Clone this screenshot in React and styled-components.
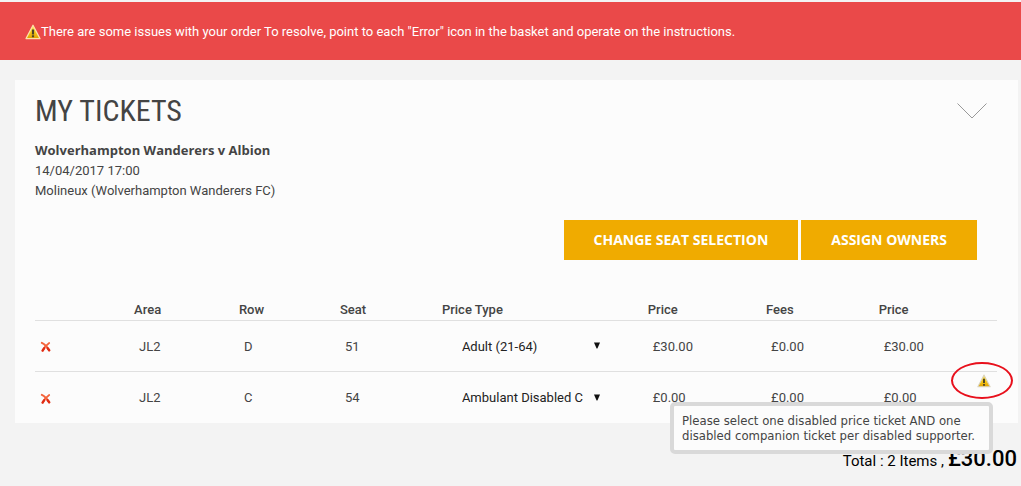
import React, { useState } from 'react'
import styled, { createGlobalStyle } from 'styled-components'

const GlobalStyle = createGlobalStyle`
  *{
    box-sizing: border-box;
  }
  body{
    margin: 0;
    background-color: #f3f3f3;
    color: #444;
    font-family: Roboto, "Liberation Sans", sans-serif;
    font-size: 13px;
    line-height: 20px;
  }
`
const Page = styled.div`
  padding-top: 2px;
`
const Banner = styled.div`
  display: flex;
  align-items: center;
  height: 58px;
  padding: 2px 25px 0;
  background-color: #ea4949;
  color: #fff;
`
const Content = styled.main`
  padding: 20px 3px 0 15px;
`
const Card = styled.section`
  padding: 13px 21px 0 20px;
  background-color: #fcfcfc;
`
const CardHeader = styled.header`
  display: flex;
  justify-content: space-between;
  align-items: center;
  height: 36px;
  padding-right: 9px;
`
const Title = styled.h1`
  margin: 0;
  font-family: "Roboto Condensed", Roboto, sans-serif;
  font-size: 30px;
  line-height: 36px;
  font-weight: 400;
`
const IconButton = styled.button`
  display: inline-flex;
  padding: 0;
  border: none;
  background: none;
  vertical-align: middle;
  cursor: pointer;
`
const Details = styled.div`
  padding-top: 12px;
`
const Line = styled.p`
  margin: 0;
`
const EventName = styled.h2`
  margin: 0 0 2px;
  font-family: "Open Sans", sans-serif;
  font-size: 13px;
  line-height: 18px;
  font-weight: 700;
`
const Actions = styled.div`
  display: flex;
  justify-content: flex-end;
  gap: 3px;
  padding: 19px 20px 40px 0;
`
const ActionButton = styled.button`
  height: 40px;
  padding: 0 30px 2px;
  border: none;
  background-color: #f0ab00;
  color: #fff;
  font-family: "Open Sans", sans-serif;
  font-size: 14px;
  font-weight: 700;
  text-transform: uppercase;
  cursor: pointer;
`
const Table = styled.table`
  width: 100%;
  table-layout: fixed;
  border-collapse: separate;
  border-spacing: 0;
`
const Col = styled.col`
  width: ${props => props.$width};
`
const Th = styled.th`
  height: 21px;
  padding: 0;
  border-bottom: 1px solid #e0e0e0;
  font-weight: 500;
  text-align: left;
`
const Td = styled.td`
  height: 51px;
  padding: 1px 0 0 5px;
  border-bottom: ${props => props.$last ? 'none' : '1px solid #e0e0e0'};
`
const FlagCell = styled(Td)`
  padding: 2px 6px 0 0;
  text-align: right;
  vertical-align: top;
`
const SelectBox = styled.div`
  display: flex;
  align-items: center;
  width: 160px;
  margin-left: 15px;
`
const Select = styled.select`
  flex: 1;
  min-width: 0;
  padding: 0;
  border: none;
  background: none;
  appearance: none;
  color: #222;
  font: inherit;
`
const Arrow = styled.svg`
  flex: none;
  margin-right: 21px;
  pointer-events: none;
`
const Flag = styled.span`
  position: relative;
  display: inline-flex;
`
const Ring = styled.span`
  position: absolute;
  left: -26px;
  top: -12px;
  width: 62px;
  height: 37px;
  border: 2px solid #e8101c;
  border-radius: 50%;
  pointer-events: none;
`
const Tooltip = styled.span`
  position: absolute;
  top: 28px;
  right: -2px;
  z-index: 5;
  width: 323px;
  padding: 7px 8px;
  border: 4px solid #d9d9d9;
  border-radius: 5px;
  background-color: #fcfcfc;
  font-family: "DejaVu Sans Condensed", "DejaVu Sans", sans-serif;
  font-size: 13px;
  line-height: 15px;
  text-align: left;
`
const Total = styled.div`
  display: flex;
  justify-content: flex-end;
  align-items: baseline;
  gap: 4px;
  padding: 20px 1px 0 0;
  color: #000;
  font-size: 15px;
  line-height: 32px;
`
const Amount = styled.strong`
  font-size: 22px;
  font-weight: 500;
`

const columns = [
  { label: '', width: '10.3%' },
  { label: 'Area', width: '10.9%' },
  { label: 'Row', width: '10.5%' },
  { label: 'Seat', width: '10.6%' },
  { label: 'Price Type', width: '21.4%' },
  { label: 'Price', width: '12.3%' },
  { label: 'Fees', width: '11.7%' },
  { label: 'Price', width: '8.2%' },
  { label: '', width: '4.1%' },
]

const tickets = [
  { area: 'JL2', row: 'D', seat: '51', type: 'Adult (21-64)', price: '£30.00', fees: '£0.00', total: '£30.00' },
  {
    area: 'JL2', row: 'C', seat: '54', type: 'Ambulant Disabled C', price: '£0.00', fees: '£0.00', total: '£0.00',
    error: 'Please select one disabled price ticket AND one disabled companion ticket per disabled supporter.',
  },
]

const WarningIcon = ({ size, outline }) => (
  <svg width={size} height={size} viewBox="0 0 16 16" aria-hidden="true">
    <defs>
      <linearGradient id="warn" x1="0" y1="0" x2="0" y2="1">
        <stop offset="0" stopColor="#fbe36a" />
        <stop offset="0.5" stopColor="#f8cc1c" />
        <stop offset="1" stopColor="#e0a000" />
      </linearGradient>
    </defs>
    <path d="M8 1.2 15 14.6H1Z" fill="url(#warn)" stroke={outline} strokeWidth="1.2" strokeLinejoin="round" />
    <path d="M6.9 5.5h2.2v4.9H6.9zM6.9 11.3h2.2v2H6.9z" fill="#4d4526" />
  </svg>
)

const RemoveIcon = () => (
  <svg width="12" height="12" viewBox="0 0 12 12" aria-hidden="true">
    <path d="M1.8 1.8C4 2.8 7.2 5.8 9.2 9.2" fill="none" stroke="#f4643c" strokeWidth="2" strokeLinecap="round" />
    <path d="M9.2 2C6.6 3.8 4.2 6.4 2.6 9.6" fill="none" stroke="#f4643c" strokeWidth="1.8" strokeLinecap="round" />
    <path d="M4.2 7.2 2.6 9.6M7.6 7.2 9.2 9.2" fill="none" stroke="#e02c14" strokeWidth="2.4" strokeLinecap="round" />
  </svg>
)

const PriceType = ({ value }) => (
  <SelectBox>
    <Select aria-label="Price type" defaultValue={value}>
      <option>{value}</option>
    </Select>
    <Arrow width="8" height="9" viewBox="0 0 8 9" aria-hidden="true">
      <path d="M1 0.5h6L4.4 6.5h-.8Z" fill="#111" />
    </Arrow>
  </SelectBox>
)

const App = () => {

  const [open, setOpen] = useState(true)

  return (
    <Page>
      <GlobalStyle />
      <Banner role="alert">
        <WarningIcon size={16} outline="#fbe3a8" />
        There are some issues with your order To resolve, point to each "Error" icon in the basket and operate on the instructions.
      </Banner>
      <Content>
        <Card>
          <CardHeader>
            <Title>MY TICKETS</Title>
            <IconButton aria-label="Toggle tickets" onClick={() => setOpen(!open)}>
              <svg width="32" height="18" viewBox="0 0 32 18" aria-hidden="true">
                <path d="M1.5 1.5 16 16 30.5 1.5" fill="none" stroke="#999" />
              </svg>
            </IconButton>
          </CardHeader>
          {open && (
            <>
              <Details>
                <EventName>Wolverhampton Wanderers v Albion</EventName>
                <Line>14/04/2017 17:00</Line>
                <Line>Molineux (Wolverhampton Wanderers FC)</Line>
              </Details>
              <Actions>
                <ActionButton>Change seat selection</ActionButton>
                <ActionButton>Assign owners</ActionButton>
              </Actions>
              <Table>
                <colgroup>
                  {columns.map((column, i) => <Col key={i} $width={column.width} />)}
                </colgroup>
                <thead>
                  <tr>
                    {columns.map((column, i) => <Th key={i}>{column.label}</Th>)}
                  </tr>
                </thead>
                <tbody>
                  {tickets.map((ticket, i) => {
                    const last = i === tickets.length - 1
                    return (
                      <tr key={ticket.seat}>
                        <Td $last={last}>
                          <IconButton aria-label={`Remove seat ${ticket.seat}`}><RemoveIcon /></IconButton>
                        </Td>
                        <Td $last={last}>{ticket.area}</Td>
                        <Td $last={last}>{ticket.row}</Td>
                        <Td $last={last}>{ticket.seat}</Td>
                        <Td $last={last}><PriceType value={ticket.type} /></Td>
                        <Td $last={last}>{ticket.price}</Td>
                        <Td $last={last}>{ticket.fees}</Td>
                        <Td $last={last}>{ticket.total}</Td>
                        <FlagCell $last={last}>
                          {ticket.error && (
                            <Flag>
                              <WarningIcon size={14} outline="#d9d3bd" />
                              <Ring />
                              <Tooltip role="tooltip">{ticket.error}</Tooltip>
                            </Flag>
                          )}
                        </FlagCell>
                      </tr>
                    )
                  })}
                </tbody>
              </Table>
            </>
          )}
        </Card>
        <Total>
          <span>Total : 2 Items ,</span>
          <Amount>£30.00</Amount>
        </Total>
      </Content>
    </Page>
  )
}

export default App
